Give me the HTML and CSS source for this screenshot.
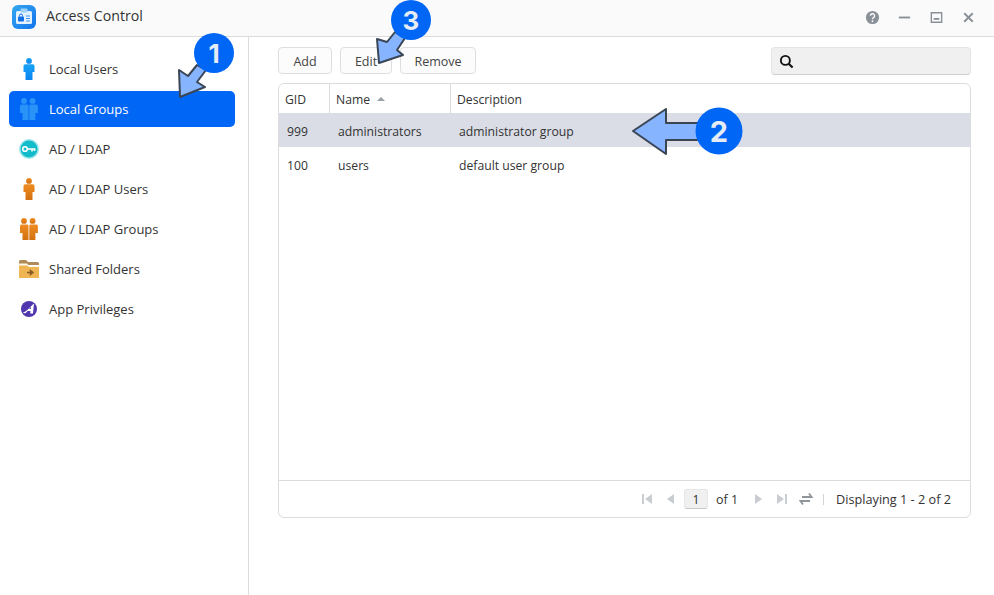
FILE: index.html
```html
<!DOCTYPE html>
<html lang="en">
<head>
<meta charset="utf-8">
<title>Access Control</title>
<link rel="stylesheet" href="styles.css">
</head>
<body>
<svg class="defs" width="0" height="0">
  <defs>
    <linearGradient id="gb" x1="0" y1="0" x2="0" y2="1"><stop offset="0" stop-color="#18a4f5"/><stop offset="1" stop-color="#0a84f0"/></linearGradient>
    <linearGradient id="go" x1="0" y1="0" x2="0" y2="1"><stop offset="0" stop-color="#f08c22"/><stop offset="1" stop-color="#d0700f"/></linearGradient>
    <linearGradient id="ga" x1="0" y1="0" x2="1" y2="1"><stop offset="0" stop-color="#35a8f2"/><stop offset="1" stop-color="#1273ec"/></linearGradient>
    <symbol id="person" viewBox="0 0 12 22">
      <circle cx="6" cy="2.900" r="2.900"/>
      <path d="M2.400 6.200H9.600Q11.500 6.200 11.500 8V14H9.500V22H2.500V14H.5V8Q.5 6.200 2.400 6.200Z"/>
    </symbol>
    <symbol id="group" viewBox="0 0 20 22">
      <circle cx="5" cy="2.900" r="2.900"/>
      <circle cx="13.600" cy="2.900" r="2.900"/>
      <path d="M2.600 6.500H8.600Q9.500 6.500 9.500 8V22H3.500V15H1V8.200Q1 6.500 2.600 6.500Z"/>
      <path d="M11.200 6.500H17.200Q18.900 6.500 18.900 8.200V15H16.400V22H10.300V8Q10.300 6.500 11.200 6.500Z"/>
    </symbol>
  </defs>
</svg>
<div class="app">
  <header class="titlebar">
    <svg class="app-logo" viewBox="0 0 24 24">
      <rect width="24" height="24" rx="6" fill="url(#ga)"/>
      <rect x="4" y="6" width="16" height="13" rx="1.500" fill="#e3f2fe"/>
      <rect x="8.500" y="3.500" width="7" height="4" rx="1" fill="#9fd0f8"/>
      <rect x="6" y="11.500" width="6" height="5" rx=".8" fill="#1570e8"/>
      <path d="M7.500 11.500V10.500A1.500 1.500 0 0 1 10.500 10.500V11.500" fill="none" stroke="#1570e8"/>
      <path d="M14 11H18M14 13.500H18M14 16H18" stroke="#3d92ee" stroke-width="1.200"/>
    </svg>
    <span class="app-title">Access Control</span>
    <div class="window-controls">
      <svg class="wc" viewBox="0 0 16 16"><circle cx="8" cy="8" r="7" fill="#8a9098"/><path d="M5.800 6.200A2.200 2.200 0 1 1 9 8.200C8.300 8.600 8 9 8 9.800" fill="none" stroke="#fafafa" stroke-width="1.500"/><circle cx="8" cy="12" r="1" fill="#fafafa"/></svg>
      <svg class="wc" viewBox="0 0 16 16"><path d="M2 8H14" stroke="#8a9098" stroke-width="2"/></svg>
      <svg class="wc" viewBox="0 0 16 16"><path d="M2.500 3H13.500V13H2.500Z" fill="none" stroke="#8a9098" stroke-width="1.500"/><path d="M5 9.500H11" stroke="#8a9098" stroke-width="2"/></svg>
      <svg class="wc" viewBox="0 0 16 16"><path d="M3.500 3.500L12.500 12.500M12.500 3.500L3.500 12.500" stroke="#8a9098" stroke-width="2"/></svg>
    </div>
  </header>
  <div class="content">
    <nav class="sidebar">
      <a class="nav-item">
        <span class="nav-icon"><svg class="ic-person blue" viewBox="0 0 12 22"><use href="#person"/></svg></span>Local Users
      </a>
      <a class="nav-item active">
        <span class="nav-icon"><svg class="ic-group sel" viewBox="0 0 20 22"><use href="#group"/></svg></span>Local Groups
      </a>
      <a class="nav-item">
        <span class="nav-icon"><svg class="ic-round" viewBox="0 0 20 20"><circle cx="10" cy="10" r="10" fill="#9fe6ea"/><circle cx="10" cy="10" r="8.500" fill="#14bccb"/><circle cx="6" cy="10" r="2.300" fill="none" stroke="#fff" stroke-width="1.600"/><path d="M8 10H16.500M13 10V12.500M15.500 10V12" stroke="#fff" stroke-width="1.600"/></svg></span>AD / LDAP
      </a>
      <a class="nav-item">
        <span class="nav-icon"><svg class="ic-person orange" viewBox="0 0 12 22"><use href="#person"/></svg></span>AD / LDAP Users
      </a>
      <a class="nav-item">
        <span class="nav-icon"><svg class="ic-group orange" viewBox="0 0 20 22"><use href="#group"/></svg></span>AD / LDAP Groups
      </a>
      <a class="nav-item">
        <span class="nav-icon"><svg class="ic-folder" viewBox="0 0 20 18"><path d="M0 1.500Q0 0 1.500 0H7L9 2H18.500Q20 2 20 3.500V5H0Z" fill="#b08a58"/><path d="M0 3.500H8L10 6H20V18H0Z" fill="#fff8ea"/><path d="M0 5.500H8L10 7H20V18H0Z" fill="#eeb552"/><path d="M8 12.500H13M11.500 10.500L14 12.500L11.500 14.500Z" stroke="#8c5a24" stroke-width="1.500" fill="#8c5a24"/></svg></span>Shared Folders
      </a>
      <a class="nav-item">
        <span class="nav-icon"><svg class="ic-app" viewBox="0 0 16 16"><circle cx="8" cy="8" r="8" fill="#4f35ae"/><path d="M1.500 12C6 10.500 9 6 13 2.600L12 12.500H9.200L9.500 10H6.600L4.500 12.200Z" fill="#fff"/><path d="M8 8H9.800L10.100 5.800Z" fill="#4f35ae"/></svg></span>App Privileges
      </a>
    </nav>
    <main class="main">
      <div class="toolbar">
        <button class="btn btn-add">Add</button>
        <button class="btn btn-edit">Edit</button>
        <button class="btn btn-remove">Remove</button>
        <div class="search">
          <svg class="search-icon" viewBox="0 0 16 16"><circle cx="6.800" cy="6.800" r="4.800" fill="none" stroke="#111" stroke-width="2"/><path d="M10.300 10.300L14.500 14.500" stroke="#111" stroke-width="2.200"/></svg>
        </div>
      </div>
      <section class="grid">
        <div class="row head">
          <div class="cell c-gid">GID</div>
          <div class="cell c-name">Name <svg class="sort" viewBox="0 0 8 4"><path d="M0 4L4 0L8 4Z" fill="#9aa0a6"/></svg></div>
          <div class="cell c-desc">Description</div>
        </div>
        <div class="rows">
          <div class="row data selected">
            <div class="cell c-gid">999</div>
            <div class="cell c-name">administrators</div>
            <div class="cell c-desc">administrator group</div>
          </div>
          <div class="row data">
            <div class="cell c-gid">100</div>
            <div class="cell c-name">users</div>
            <div class="cell c-desc">default user group</div>
          </div>
        </div>
        <footer class="pager">
          <svg class="pg" viewBox="0 0 12 12"><path d="M1 1H3V11H1ZM11 1V11L4 6Z" fill="#c9ccd0"/></svg>
          <svg class="pg prev" viewBox="0 0 12 12"><path d="M9 1V11L2 6Z" fill="#c9ccd0"/></svg>
          <span class="page-box">1</span>
          <span class="page-of">of 1</span>
          <svg class="pg" viewBox="0 0 12 12"><path d="M3 1V11L10 6Z" fill="#c9ccd0"/></svg>
          <svg class="pg last" viewBox="0 0 12 12"><path d="M11 1H9V11H11ZM1 1V11L8 6Z" fill="#c9ccd0"/></svg>
          <svg class="pg refresh" viewBox="0 0 14 14"><path d="M3 5H12.500L10 1.500M11 9H1.500L4 12.500" fill="none" stroke="#8f959b" stroke-width="1.800"/></svg>
          <span class="sep"></span>
          <span class="display">Displaying 1 - 2 of 2</span>
        </footer>
      </section>
    </main>
  </div>
  <svg class="arrows" viewBox="0 0 994 595">
    <g fill="#86b4ff" stroke="#3a4655" stroke-width="2" stroke-linejoin="round">
      <path d="M197 65L188 76L179 70L180 97L205 87L197 82L206 70Z"/>
      <path d="M395 32L387 42L377 39L379 63L403 55L397 50L405 38Z"/>
      <path d="M700 123H666V109L633 131L666 154V140H700Z"/>
    </g>
    <g class="badge">
      <circle cx="214" cy="53" r="20"/><text x="214" y="62.500">1</text>
      <circle cx="719" cy="131" r="23.500"/><text x="719" y="141.500" class="big">2</text>
      <circle cx="411" cy="20" r="20"/><text x="411" y="29.500">3</text>
    </g>
  </svg>
</div>
</body>
</html>
```
FILE: styles.css
```css
* { box-sizing: border-box; }
html, body { margin: 0; padding: 0; }
body {
  width: 994px;
  height: 595px;
  overflow: hidden;
  background: #fff;
  font-family: "Open Sans", "Noto Sans", sans-serif;
  font-size: 12.200px;
  color: #333;
}
.defs { position: absolute; }
.app { position: relative; width: 994px; height: 595px; display: flex; flex-direction: column; }

.titlebar {
  height: 37px;
  flex: none;
  display: flex;
  align-items: center;
  padding: 0 18px 2px 12px;
  background: #fafafa;
  border-bottom: 1px solid #dcdcdc;
}
.app-logo { width: 24px; height: 24px; }
.app-title { margin-left: 10px; padding-bottom: 4px; font-size: 14.200px; color: #333; }
.window-controls { margin-left: auto; display: flex; gap: 17px; align-items: center; }
.wc { width: 15px; height: 15px; display: block; }

.content { flex: 1; display: flex; min-height: 0; }
.sidebar {
  width: 249px;
  flex: none;
  border-right: 1px solid #dcdcdc;
  padding: 14px 13px 0 9px;
  display: flex;
  flex-direction: column;
  gap: 4px;
  font-size: 13px;
}
.nav-item {
  height: 36px;
  display: flex;
  align-items: center;
  padding-left: 10px;
  border-radius: 5px;
  color: #333;
}
.nav-item.active { background: #0066f5; color: #fff; }
.nav-icon { width: 20px; height: 22px; margin-right: 10px; display: flex; align-items: center; justify-content: center; flex: none; }
.ic-person { width: 12px; height: 22px; }
.ic-group { width: 20px; height: 22px; }
.ic-round { width: 20px; height: 20px; }
.ic-folder { width: 20px; height: 18px; }
.ic-app { width: 16px; height: 16px; }
.blue { fill: url(#gb); }
.orange { fill: url(#go); }
.sel { fill: #2a93f7; }

.main { flex: 1; padding: 10px 23px 0 29px; display: flex; flex-direction: column; min-width: 0; }
.toolbar { display: flex; height: 28px; flex: none; }
.btn {
  height: 27px;
  padding: 1px 0 0;
  border: 1px solid #dedede;
  border-radius: 4px;
  background: #fcfcfc;
  font: inherit;
  font-size: 12.500px;
  color: #444;
}
.btn-add { width: 54px; }
.btn-edit { width: 52px; margin-left: 8px; }
.btn-remove { width: 76px; margin-left: 8px; }
.search {
  width: 200px;
  height: 28px;
  margin-left: auto;
  display: flex;
  align-items: center;
  padding-left: 7px;
  background: #f0f0f0;
  border: 1px solid #e4e4e4;
  border-bottom-color: #cfcfcf;
  border-radius: 4px;
}
.search-icon { width: 15px; height: 15px; }

.grid {
  margin-top: 8px;
  width: 693px;
  height: 435px;
  border: 1px solid #dcdcdc;
  border-radius: 6px;
  display: flex;
  flex-direction: column;
  overflow: hidden;
}
.row { display: flex; align-items: stretch; flex: none; }
.head { height: 29px; }
.head .cell { display: flex; align-items: center; padding: 2px 0 0 6px; gap: 7px; }
.head .c-gid, .head .c-name { border-right: 1px solid #dcdcdc; }
.cell { display: flex; align-items: center; }
.c-gid { width: 51px; padding: 2px 0 0 8px; }
.c-name { width: 121px; padding: 2px 0 0 8px; }
.c-desc { flex: 1; padding: 2px 0 0 8px; }
.sort { width: 8px; height: 4px; margin-top: -2px; }
.rows { flex: 1; }
.data { height: 34px; }
.selected { background: #dadde6; }
.pager {
  height: 37px;
  flex: none;
  border-top: 1px solid #dcdcdc;
  display: flex;
  align-items: center;
  justify-content: flex-end;
  padding-right: 19px;
}
.pg { width: 12px; height: 12px; margin-right: 12px; }
.pg.prev { margin-right: 7px; }
.pg.last { margin-right: 11px; }
.page-box {
  width: 24px;
  height: 20px;
  margin-right: 8px;
  display: flex;
  align-items: center;
  justify-content: center;
  background: #f0f0f0;
  border: 1px solid #e6e6e6;
  border-bottom-color: #c8c8c8;
  border-radius: 3px;
}
.page-of { margin-right: 14px; font-size: 12.500px; }
.pg.refresh { width: 14px; height: 14px; margin-right: 10px; }
.sep { width: 1px; height: 11px; background: #d4d4d4; margin-right: 12px; }
.display { font-size: 12.700px; }

.arrows { position: absolute; left: 0; top: 0; width: 994px; height: 595px; pointer-events: none; }
.badge circle { fill: #0066f5; }
.badge text {
  fill: #e6ecf5;
  font-family: "Inter", "Liberation Sans", sans-serif;
  font-size: 26px;
  font-weight: 700;
  text-anchor: middle;
}
.badge text.big { font-size: 29px; }
```
